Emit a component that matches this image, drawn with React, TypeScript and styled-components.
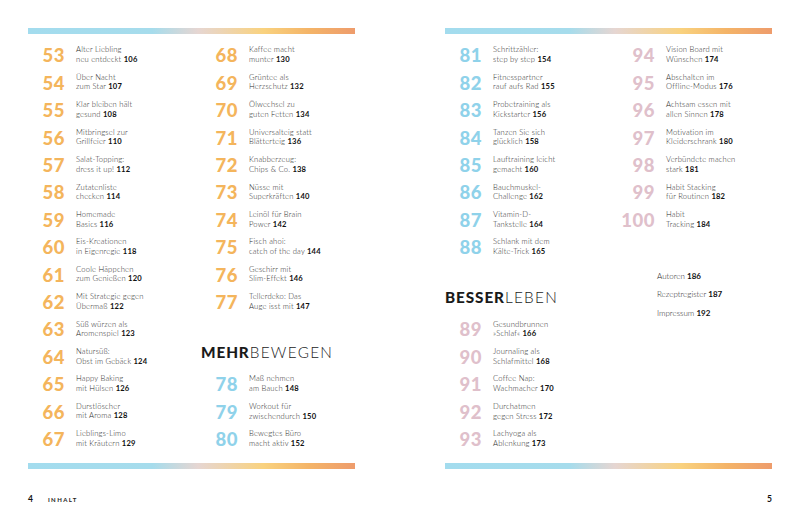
import React from "react";
import styled, { createGlobalStyle } from "styled-components";

const GlobalStyle = createGlobalStyle`
  html, body { margin: 0; padding: 0; background: #ffffff; }
  body { font-family: Lato, "Noto Sans", sans-serif; color: #222; }
`;

type Tone = "orange" | "blue" | "pink";
const toneColor: Record<Tone, string> = {
  orange: "#F4B55C",
  blue: "#8FD2EA",
  pink: "#DFC0CB",
};

const ROW = 27.43;

const Spread = styled.div`
  display: flex;
  width: 800px;
  height: 523px;
  overflow: hidden;
`;

const Page = styled.div<{ $side: "left" | "right" }>`
  width: 400px;
  box-sizing: border-box;
  padding-top: 28px;
  padding-left: ${(p) => (p.$side === "left" ? 28 : 45)}px;
  padding-right: ${(p) => (p.$side === "left" ? 45 : 28)}px;
  display: flex;
  flex-direction: column;
`;

const Bar = styled.div`
  height: 6px;
  width: 100%;
  background: linear-gradient(
    90deg,
    #a3dcee 0%,
    #a6dcec 38%,
    #e6d6d2 52%,
    #f9d27f 72%,
    #f4b468 86%,
    #ee9c6c 100%
  );
`;

const Columns = styled.div`
  display: grid;
  grid-template-columns: 173px 154px;
  margin-top: 7.3px;
  margin-bottom: 10.5px;
  height: ${ROW * 15}px;
`;

const Column = styled.div`
  display: flex;
  flex-direction: column;
`;

const EntryRow = styled.div`
  height: ${ROW}px;
  display: flex;
  align-items: center;
`;

const Num = styled.span<{ $tone: Tone }>`
  width: 37px;
  flex: none;
  text-align: right;
  font-family: Lato, "Noto Sans", sans-serif;
  font-weight: 900;
  font-size: 18.5px;
  letter-spacing: 0.5px;
  line-height: 1;
  color: ${(p) => toneColor[p.$tone]};
  margin-top: 1px;
`;

const Title = styled.div`
  margin-left: 11px;
  font-size: 7.6px;
  line-height: 9.6px;
  font-weight: 300;
  color: #2a2a2a;
  white-space: nowrap;
  letter-spacing: 0.2px;
`;

const PageRef = styled.b`
  font-weight: 700;
  color: #111;
`;

const HeadingBlock = styled.div`
  height: ${ROW * 2}px;
  box-sizing: border-box;
  padding-top: 29px;
`;

const Heading = styled.div`
  font-size: 15.3px;
  line-height: 15px;
  color: #1a1a1a;
  white-space: nowrap;
  letter-spacing: 1.3px;
  font-weight: 300;
`;

const HeadStrong = styled.span`
  font-weight: 900;
  letter-spacing: 0.9px;
`;

const Extras = styled.div`
  padding-top: 39px;
  padding-left: 39px;
  display: flex;
  flex-direction: column;
  gap: 8.6px;
`;

const Extra = styled.div`
  font-size: 8px;
  line-height: 9.6px;
  font-weight: 300;
  color: #2a2a2a;
  white-space: nowrap;
`;

const Footer = styled.div<{ $side: "left" | "right" }>`
  margin-top: 25px;
  display: flex;
  align-items: center;
  justify-content: ${(p) => (p.$side === "left" ? "flex-start" : "flex-end")};
  gap: 15px;
`;

const FolioNum = styled.span`
  font-size: 8.5px;
  font-weight: 700;
  color: #111;
`;

const FolioLabel = styled.span`
  font-size: 6px;
  font-weight: 700;
  letter-spacing: 1.4px;
  color: #222;
`;

type Item = { n: number; a: string; b: string; p: number };

const Entry: React.FC<{ item: Item; tone: Tone }> = ({ item, tone }) => (
  <EntryRow>
    <Num $tone={tone}>{item.n}</Num>
    <Title>
      {item.a}
      <br />
      {item.b} <PageRef>{item.p}</PageRef>
    </Title>
  </EntryRow>
);

const left1: Item[] = [
  { n: 53, a: "Alter Liebling", b: "neu entdeckt", p: 106 },
  { n: 54, a: "Über Nacht", b: "zum Star", p: 107 },
  { n: 55, a: "Klar bleiben hält", b: "gesund", p: 108 },
  { n: 56, a: "Mitbringsel zur", b: "Grillfeier", p: 110 },
  { n: 57, a: "Salat-Topping:", b: "dress it up!", p: 112 },
  { n: 58, a: "Zutatenliste", b: "checken", p: 114 },
  { n: 59, a: "Homemade", b: "Basics", p: 116 },
  { n: 60, a: "Eis-Kreationen", b: "in Eigenregie", p: 118 },
  { n: 61, a: "Coole Häppchen", b: "zum Genießen", p: 120 },
  { n: 62, a: "Mit Strategie gegen", b: "Übermaß", p: 122 },
  { n: 63, a: "Süß würzen als", b: "Aromenspiel", p: 123 },
  { n: 64, a: "Natursüß:", b: "Obst im Gebäck", p: 124 },
  { n: 65, a: "Happy Baking", b: "mit Hülsen", p: 126 },
  { n: 66, a: "Durstlöscher", b: "mit Aroma", p: 128 },
  { n: 67, a: "Lieblings-Limo", b: "mit Kräutern", p: 129 },
];

const left2a: Item[] = [
  { n: 68, a: "Kaffee macht", b: "munter", p: 130 },
  { n: 69, a: "Grüntee als", b: "Herzschutz", p: 132 },
  { n: 70, a: "Ölwechsel zu", b: "guten Fetten", p: 134 },
  { n: 71, a: "Universalteig statt", b: "Blätterteig", p: 136 },
  { n: 72, a: "Knabberzeug:", b: "Chips & Co.", p: 138 },
  { n: 73, a: "Nüsse mit", b: "Superkräften", p: 140 },
  { n: 74, a: "Leinöl für Brain", b: "Power", p: 142 },
  { n: 75, a: "Fisch ahoi:", b: "catch of the day", p: 144 },
  { n: 76, a: "Geschirr mit", b: "Slim-Effekt", p: 146 },
  { n: 77, a: "Tellerdeko: Das", b: "Auge isst mit", p: 147 },
];

const left2b: Item[] = [
  { n: 78, a: "Maß nehmen", b: "am Bauch", p: 148 },
  { n: 79, a: "Workout für", b: "zwischendurch", p: 150 },
  { n: 80, a: "Bewegtes Büro", b: "macht aktiv", p: 152 },
];

const right1a: Item[] = [
  { n: 81, a: "Schrittzähler:", b: "step by step", p: 154 },
  { n: 82, a: "Fitnesspartner", b: "rauf aufs Rad", p: 155 },
  { n: 83, a: "Probetraining als", b: "Kickstarter", p: 156 },
  { n: 84, a: "Tanzen Sie sich", b: "glücklich", p: 158 },
  { n: 85, a: "Lauftraining leicht", b: "gemacht", p: 160 },
  { n: 86, a: "Bauchmuskel-", b: "Challenge", p: 162 },
  { n: 87, a: "Vitamin-D-", b: "Tankstelle", p: 164 },
  { n: 88, a: "Schlank mit dem", b: "Kälte-Trick", p: 165 },
];

const right1b: Item[] = [
  { n: 89, a: "Gesundbrunnen", b: "»Schlaf«", p: 166 },
  { n: 90, a: "Journaling als", b: "Schlafmittel", p: 168 },
  { n: 91, a: "Coffee Nap:", b: "Wachmacher", p: 170 },
  { n: 92, a: "Durchatmen", b: "gegen Stress", p: 172 },
  { n: 93, a: "Lachyoga als", b: "Ablenkung", p: 173 },
];

const right2: Item[] = [
  { n: 94, a: "Vision Board mit", b: "Wünschen", p: 174 },
  { n: 95, a: "Abschalten im", b: "Offline-Modus", p: 176 },
  { n: 96, a: "Achtsam essen mit", b: "allen Sinnen", p: 178 },
  { n: 97, a: "Motivation im", b: "Kleiderschrank", p: 180 },
  { n: 98, a: "Verbündete machen", b: "stark", p: 181 },
  { n: 99, a: "Habit Stacking", b: "für Routinen", p: 182 },
  { n: 100, a: "Habit", b: "Tracking", p: 184 },
];

const extras = [
  { t: "Autoren", p: 186 },
  { t: "Rezeptregister", p: 187 },
  { t: "Impressum", p: 192 },
];

export default function App() {
  return (
    <>
      <GlobalStyle />
      <Spread>
        <Page $side="left">
          <Bar />
          <Columns>
            <Column>
              {left1.map((it) => (
                <Entry key={it.n} item={it} tone="orange" />
              ))}
            </Column>
            <Column>
              {left2a.map((it) => (
                <Entry key={it.n} item={it} tone="orange" />
              ))}
              <HeadingBlock>
                <Heading>
                  <HeadStrong>MEHR</HeadStrong>BEWEGEN
                </Heading>
              </HeadingBlock>
              {left2b.map((it) => (
                <Entry key={it.n} item={it} tone="blue" />
              ))}
            </Column>
          </Columns>
          <Bar />
          <Footer $side="left">
            <FolioNum>4</FolioNum>
            <FolioLabel>INHALT</FolioLabel>
          </Footer>
        </Page>
        <Page $side="right">
          <Bar />
          <Columns>
            <Column>
              {right1a.map((it) => (
                <Entry key={it.n} item={it} tone="blue" />
              ))}
              <HeadingBlock>
                <Heading>
                  <HeadStrong>BESSER</HeadStrong>LEBEN
                </Heading>
              </HeadingBlock>
              {right1b.map((it) => (
                <Entry key={it.n} item={it} tone="pink" />
              ))}
            </Column>
            <Column>
              {right2.map((it) => (
                <Entry key={it.n} item={it} tone="pink" />
              ))}
              <Extras>
                {extras.map((e) => (
                  <Extra key={e.t}>
                    {e.t} <PageRef>{e.p}</PageRef>
                  </Extra>
                ))}
              </Extras>
            </Column>
          </Columns>
          <Bar />
          <Footer $side="right">
            <FolioNum>5</FolioNum>
          </Footer>
        </Page>
      </Spread>
    </>
  );
}
